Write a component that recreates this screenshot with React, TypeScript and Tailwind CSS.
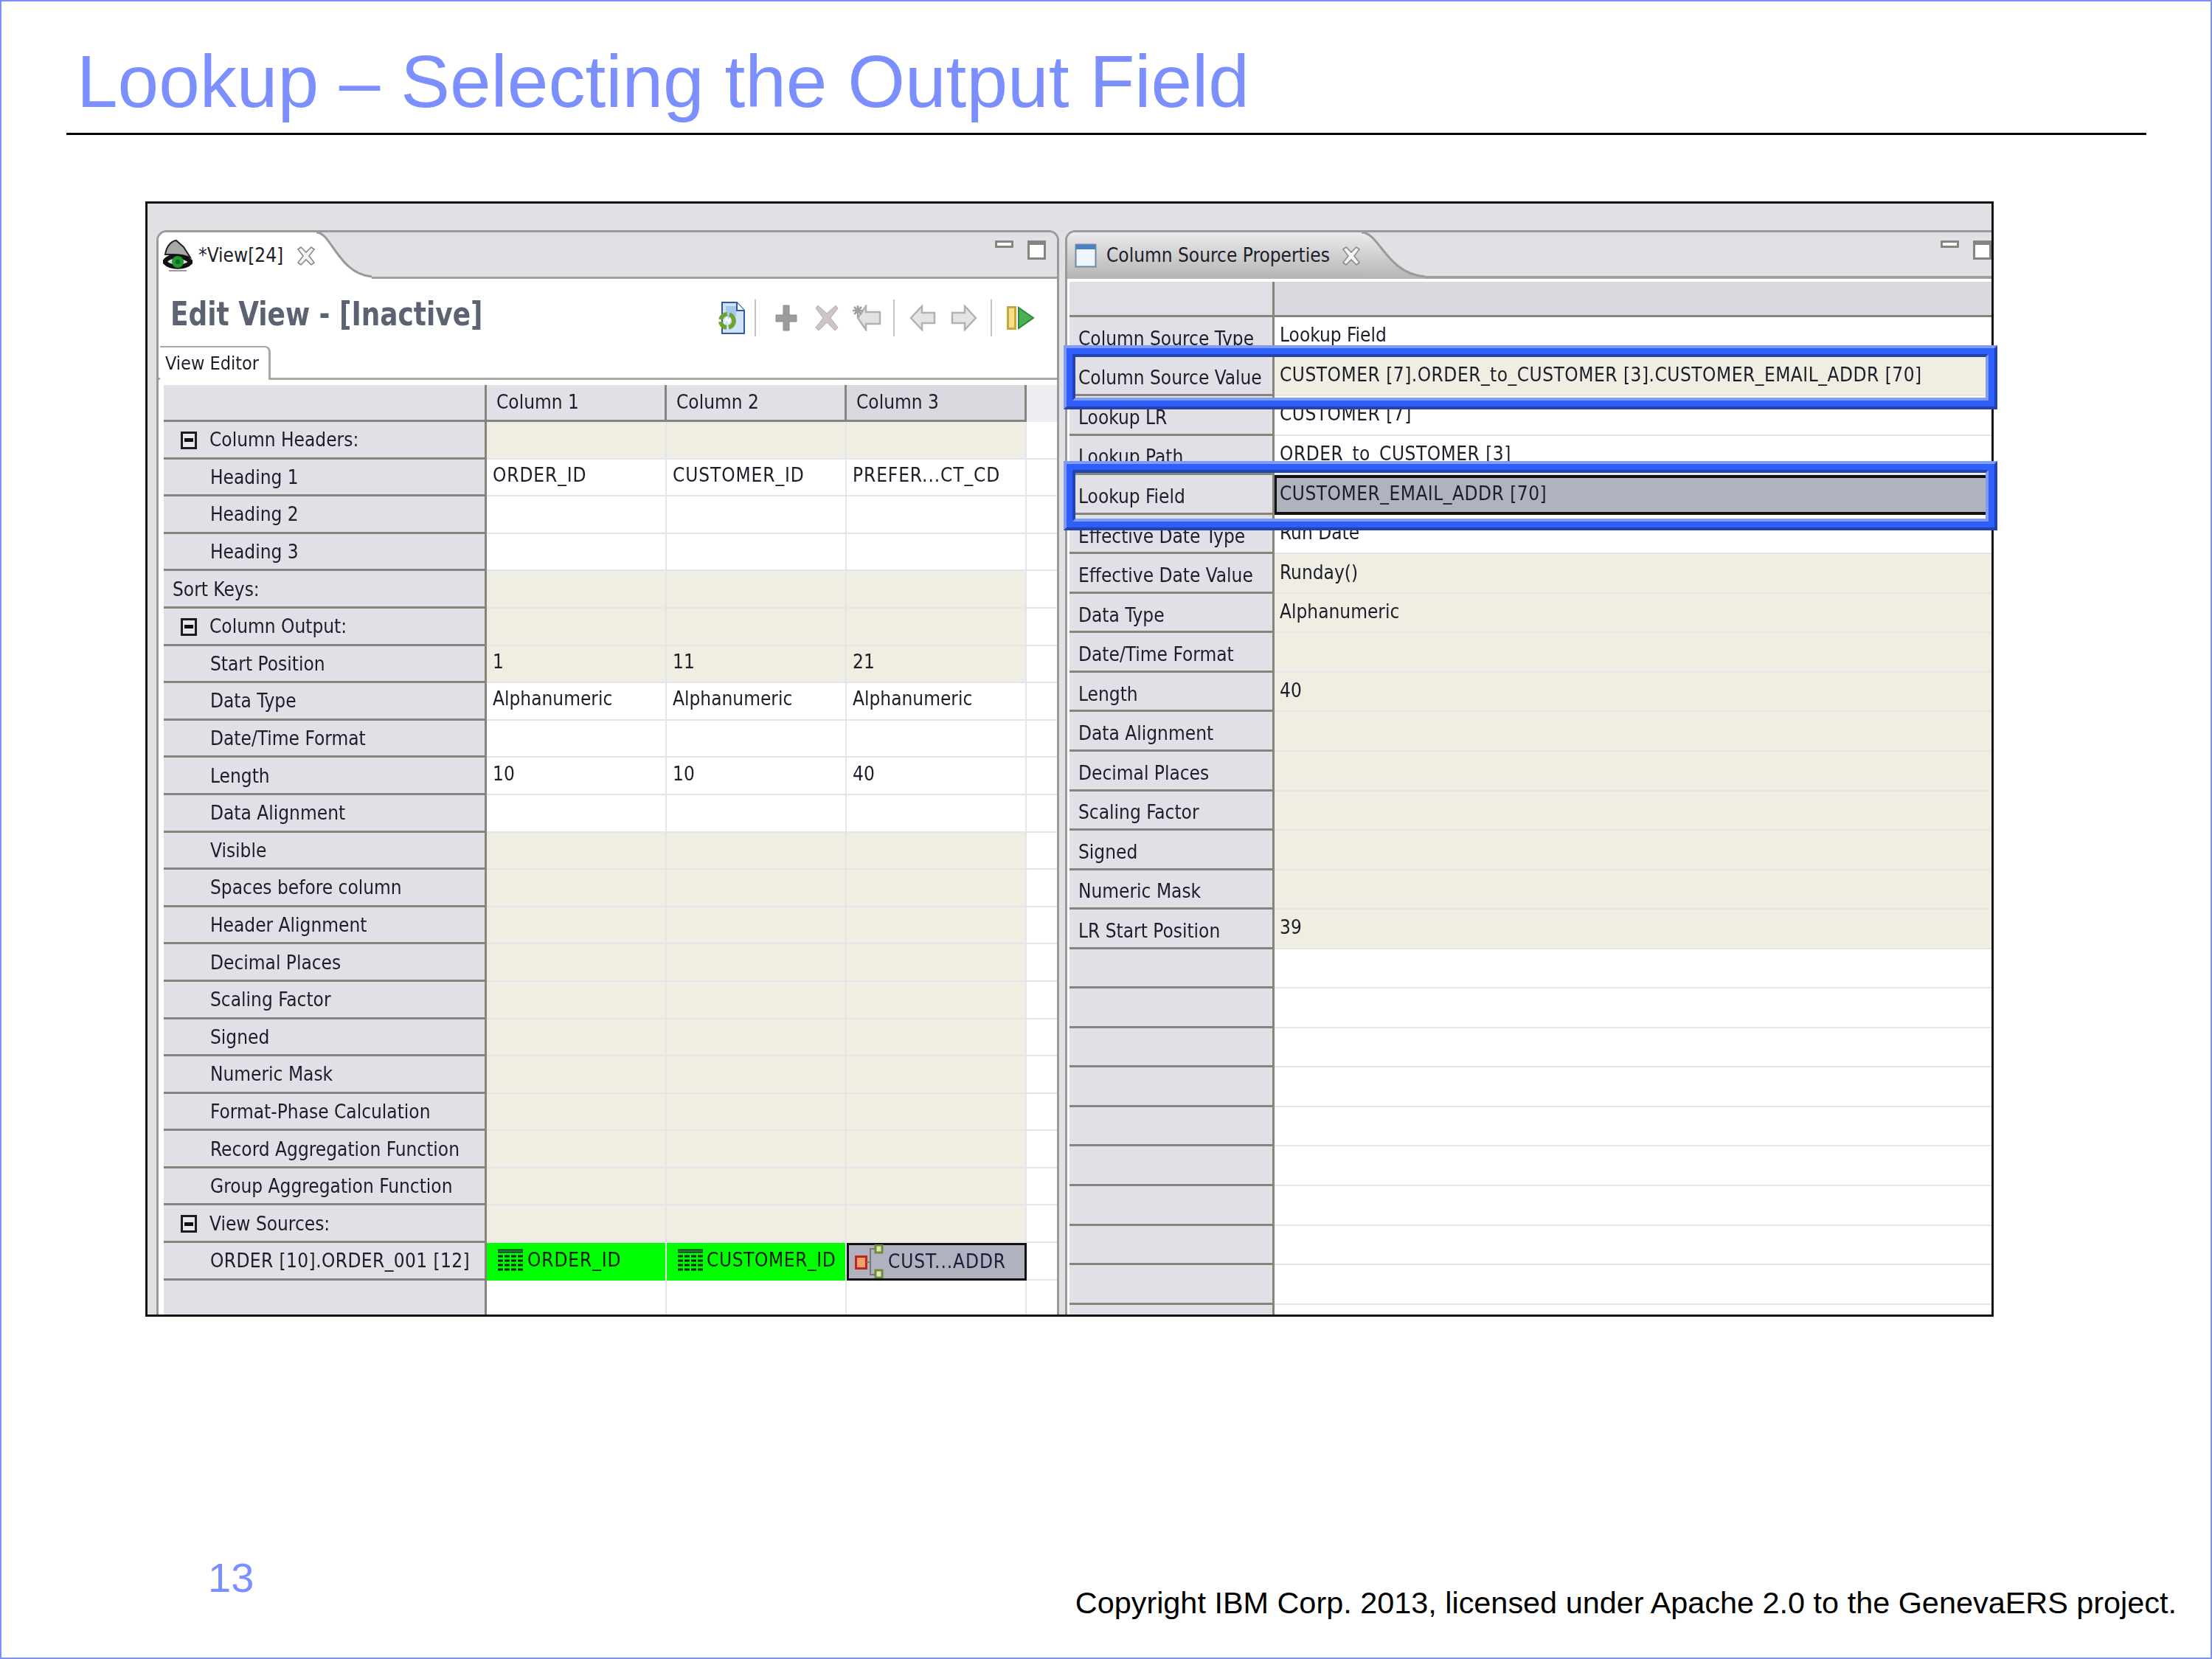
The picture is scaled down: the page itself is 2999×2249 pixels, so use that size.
const leftRows = [
  { label: "Column Headers:", tree: true, bg: "beige" },
  { label: "Heading 1", cells: ["ORDER_ID", "CUSTOMER_ID", "PREFER...CT_CD"], bg: "white" },
  { label: "Heading 2", bg: "white" },
  { label: "Heading 3", bg: "white" },
  { label: "Sort Keys:", flush: true, bg: "beige" },
  { label: "Column Output:", tree: true, bg: "beige" },
  { label: "Start Position", cells: ["1", "11", "21"], bg: "beige" },
  { label: "Data Type", cells: ["Alphanumeric", "Alphanumeric", "Alphanumeric"], bg: "white" },
  { label: "Date/Time Format", bg: "white" },
  { label: "Length", cells: ["10", "10", "40"], bg: "white" },
  { label: "Data Alignment", bg: "white" },
  { label: "Visible", bg: "beige" },
  { label: "Spaces before column", bg: "beige" },
  { label: "Header Alignment", bg: "beige" },
  { label: "Decimal Places", bg: "beige" },
  { label: "Scaling Factor", bg: "beige" },
  { label: "Signed", bg: "beige" },
  { label: "Numeric Mask", bg: "beige" },
  { label: "Format-Phase Calculation", bg: "beige" },
  { label: "Record Aggregation Function", bg: "beige" },
  { label: "Group Aggregation Function", bg: "beige" },
  { label: "View Sources:", tree: true, bg: "beige" },
];

const rightRows = [
  { label: "Column Source Type", value: "Lookup Field", bg: "white" },
  { label: "Column Source Value", value: "CUSTOMER [7].ORDER_to_CUSTOMER [3].CUSTOMER_EMAIL_ADDR [70]", bg: "beige" },
  { label: "Lookup LR", value: "CUSTOMER [7]", bg: "white" },
  { label: "Lookup Path", value: "ORDER_to_CUSTOMER [3]", bg: "white" },
  { label: "Lookup Field", value: "CUSTOMER_EMAIL_ADDR [70]", bg: "selected" },
  { label: "Effective Date Type", value: "Run Date", bg: "white" },
  { label: "Effective Date Value", value: "Runday()", bg: "beige" },
  { label: "Data Type", value: "Alphanumeric", bg: "beige" },
  { label: "Date/Time Format", value: "", bg: "beige" },
  { label: "Length", value: "40", bg: "beige" },
  { label: "Data Alignment", value: "", bg: "beige" },
  { label: "Decimal Places", value: "", bg: "beige" },
  { label: "Scaling Factor", value: "", bg: "beige" },
  { label: "Signed", value: "", bg: "beige" },
  { label: "Numeric Mask", value: "", bg: "beige" },
  { label: "LR Start Position", value: "39", bg: "beige" },
  { label: "", value: "", bg: "white" },
  { label: "", value: "", bg: "white" },
  { label: "", value: "", bg: "white" },
  { label: "", value: "", bg: "white" },
  { label: "", value: "", bg: "white" },
  { label: "", value: "", bg: "white" },
  { label: "", value: "", bg: "white" },
  { label: "", value: "", bg: "white" },
  { label: "", value: "", bg: "white" },
  { label: "", value: "", bg: "white" },
];

// capitals run wider in the original font
const isCaps = (s?: string) => !!s && /[A-Z_]{3}/.test(s);

function TreeBox() {
  return (
    <span className="flex h-[24px] w-[22px] items-center justify-center border-[3px] border-[#1c1c1c] bg-[#e8e8ec] mr-[17px] ml-[23px]">
      <span className="h-[5px] w-[12px] bg-[#111]" />
    </span>
  );
}

function GridIcon() {
  return (
    <svg width="36" height="31" viewBox="0 0 36 31" className="shrink-0">
      <path d="M1 1.5h34M1 4.5h34" stroke="#123" strokeWidth="2" />
      <path d="M1 10h34M1 16h34M1 22h34M1 28h34" stroke="#0a2a0a" strokeWidth="3" strokeDasharray="7 2" />
    </svg>
  );
}

function LookupIcon() {
  return (
    <svg width="40" height="46" viewBox="0 0 40 46" className="shrink-0">
      <rect x="1.5" y="16.5" width="14" height="16" fill="#f4a070" stroke="#c0281c" strokeWidth="3" />
      <path d="M16 24h5M21 24V6h8M21 24v17h8" stroke="#777" strokeWidth="2" fill="none" />
      <rect x="28" y="1" width="9" height="10" fill="#e0e8b0" stroke="#6f8a3a" strokeWidth="3" />
      <rect x="28" y="35" width="9" height="10" fill="#e0e8b0" stroke="#6f8a3a" strokeWidth="3" />
    </svg>
  );
}

function CloseIcon() {
  return (
    <svg width="28" height="28" viewBox="0 0 28 28" className="shrink-0">
      <path d="M3 5l4-3 7 7 7-7 4 3-7 9 7 9-4 3-7-7-7 7-4-3 7-9z" fill="#f4f4f4" stroke="#8a8a8a" strokeWidth="1.6" />
    </svg>
  );
}

function EyeIcon() {
  return (
    <svg width="40" height="44" viewBox="0 0 40 44" className="shrink-0">
      <path d="M3 20C5 6 14 1 18 1l10 9 9 14-11-3-12-1z" fill="#a8a8a8" stroke="#222" strokeWidth="2" />
      <path d="M2 30c6-10 26-10 36 0-8 9-28 9-36 0z" fill="#ddd" stroke="#111" strokeWidth="6" />
      <circle cx="20" cy="30" r="8" fill="#1f9a2e" />
      <circle cx="20" cy="30" r="3" fill="#063" />
      <path d="M8 42h24" stroke="#999" strokeWidth="2" />
    </svg>
  );
}

function WindowIcon() {
  return (
    <svg width="30" height="33" viewBox="0 0 30 33" className="shrink-0">
      <rect x="1.5" y="1.5" width="27" height="30" fill="#eef5fd" stroke="#7088a8" strokeWidth="2" />
      <rect x="2" y="2" width="26" height="6" fill="#4a7fc4" />
    </svg>
  );
}

function MinMax() {
  return (
    <div className="flex items-start gap-[19px]">
      <span className="h-[10px] w-[25px] border-[3px] border-[#85857d] bg-white rounded-[1px]" />
      <span className="h-[26px] w-[25px] border-[3px] border-t-[6px] border-[#85857d] bg-white" />
    </div>
  );
}

function Separator() {
  return <span className="block h-[50px] w-[2px] bg-[#c4c4c4]" />;
}

function DocSyncIcon() {
  return (
    <svg width="38" height="44" viewBox="0 0 38 44">
      <path d="M6 1h20l10 11v31H6z" fill="#cfe2f8" stroke="#2c5aa8" strokeWidth="2" />
      <rect x="11" y="6" width="14" height="14" fill="#a8c8ee" />
      <path d="M26 1v11h10" fill="#fff" stroke="#2c5aa8" strokeWidth="2" />
      <circle cx="13" cy="26" r="9" fill="none" stroke="#6ca52e" strokeWidth="6" strokeDasharray="12 3" />
      <path d="M9 30l3-8 3 6 2-6" fill="none" stroke="#fff" strokeWidth="2" />
    </svg>
  );
}

function PlusIcon() {
  return (
    <svg width="30" height="36" viewBox="0 0 30 36">
      <path d="M11 1h8v13h10v9H19v12h-8V23H1v-9h10z" fill="#9c9c9c" stroke="#8a8a8a" />
    </svg>
  );
}

function CrossIcon() {
  return (
    <svg width="32" height="36" viewBox="0 0 32 36">
      <path d="M4 1l12 11L28 1l3 4-10 13 10 13-4 4-11-11L5 35l-4-4 10-13L1 5z" fill="#cfc4c4" stroke="#b8aaaa" />
    </svg>
  );
}

function StarBackIcon() {
  return (
    <svg width="40" height="36" viewBox="0 0 40 36">
      <path d="M8 18L19 2v8h19v16H19v8z" fill="#e2e2e6" stroke="#b0b0b0" strokeWidth="2.5" />
      <path d="M8 1v16M1 8h14M3 3l10 10M13 3L3 13" stroke="#a0a0a0" strokeWidth="2.5" />
    </svg>
  );
}

function ArrowIcon({ flip }: { flip?: boolean }) {
  return (
    <svg width="36" height="36" viewBox="0 0 36 36" className={flip ? "-scale-x-100" : ""}>
      <path d="M2 18L17 2v9h17v14H17v9z" fill="#e4e4e8" stroke="#b2b2b2" strokeWidth="2.5" />
    </svg>
  );
}

function RunIcon() {
  return (
    <svg width="38" height="32" viewBox="0 0 38 32">
      <rect x="1.5" y="1.5" width="10" height="29" fill="#f4e08a" stroke="#c8a83a" strokeWidth="3" />
      <path d="M16 2l20 14-20 14z" fill="#4caf50" stroke="#2a8a3a" strokeWidth="2" />
    </svg>
  );
}

function LeftCell({ bg, text }: { bg: string; text?: string }) {
  return (
    <div
      className={`flex w-[244px] items-center border-r-2 border-b-2 border-[#e4e4ec] pl-[8px] pb-[5px] ${bg === "beige" ? "bg-[#f0ede2]" : "bg-white"} ${isCaps(text) ? "tracking-[0.9px]" : ""}`}
    >
      {text}
    </div>
  );
}

function LeftTable() {
  return (
    <div className="flex flex-col">
      {/* header */}
      <div className="flex h-[50px] bg-[#eeeef2] text-[#1d1d2b]">
        <div className="w-[438px] border-r-[3px] border-b-[3px] border-[#85857d] bg-[#e0e0e6]" />
        {["Column 1", "Column 2", "Column 3"].map((name, i) => (
          <div
            key={name}
            className={`flex w-[244px] items-center border-r-[3px] border-b-[3px] border-[#85857d] pl-[13px] ${i === 2 ? "bg-[#d9dae0]" : "bg-[#e0e0e6]"}`}
          >
            {name}
          </div>
        ))}
      </div>
      {leftRows.map((row) => (
        <div key={row.label} className="flex h-[50.6px]">
          <div className={`flex w-[438px] items-center border-r-[3px] border-b-[3px] border-[#85857d] bg-[#e0e0e6] pt-[2px] ${row.flush ? "pl-[12px]" : row.tree ? "" : "pl-[63px]"}`}>
            {row.tree && <TreeBox />}
            {row.label}
          </div>
          {[0, 1, 2].map((i) => (
            <LeftCell key={i} bg={row.bg} text={row.cells?.[i]} />
          ))}
          <div className="flex-1 border-b-2 border-[#e4e4ec]" />
        </div>
      ))}
      {/* the source row: two green cells, one selected */}
      <div className="flex h-[50.6px]">
        <div className="flex w-[438px] items-center border-r-[3px] border-b-[3px] border-[#85857d] bg-[#e0e0e6] pl-[63px] pt-[2px] tracking-[0.4px]">
          ORDER [10].ORDER_001 [12]
        </div>
        <div className="flex w-[244px] items-center gap-[5px] border-r-2 border-[#e4e4ec] bg-[#00ff00] pl-[14px] pb-[3px] text-[#0a1a0a] tracking-[0.9px]">
          <GridIcon />ORDER_ID
        </div>
        <div className="flex w-[244px] items-center gap-[4px] border-r-2 border-[#e4e4ec] bg-[#00ff00] pl-[14px] pb-[3px] text-[#0a1a0a] tracking-[0.6px]">
          <GridIcon />CUSTOMER_ID
        </div>
        <div className="flex w-[244px] items-center gap-[5px] border-[3px] border-[#111] bg-[#b0b2bf] pl-[8px] text-[#1d1d3b] tracking-[0.9px]">
          <LookupIcon />CUST...ADDR
        </div>
        <div className="flex-1 border-b-2 border-[#e4e4ec]" />
      </div>
      <div className="flex h-[60px]">
        <div className="w-[438px] border-r-[3px] border-[#85857d] bg-[#e0e0e6]" />
        <div className="w-[244px] border-r-2 border-[#e4e4ec]" />
        <div className="w-[244px] border-r-2 border-[#e4e4ec]" />
        <div className="w-[244px] border-r-2 border-[#e4e4ec]" />
      </div>
    </div>
  );
}

function RightTable() {
  return (
    <div className="flex flex-col">
      <div className="flex h-[48px] bg-[#d9dae0]">
        <div className="w-[278px] border-r-[3px] border-b-[3px] border-[#85857d] bg-[#dfdfe5]" />
        <div className="flex-1 border-b-[3px] border-[#85857d]" />
      </div>
      {rightRows.map((row, i) => (
        <div key={i} className="flex h-[53.55px] shrink-0">
          <div className="flex w-[278px] items-center border-r-[3px] border-b-[3px] border-[#85857d] bg-[#e0e0e6] pl-[12px] pt-[8px]">
            {row.label}
          </div>
          <div
            className={`flex flex-1 items-center ${isCaps(row.value) ? "tracking-[0.5px]" : ""} ${
              row.bg === "selected"
                ? "border-y-[4px] border-l-[3px] border-[#111] bg-[#b0b2bf] pl-[4px] pb-[2px]"
                : row.bg === "beige"
                  ? "border-b-2 border-[#e6e6ea] bg-[#f0ede2] pl-[7px] pb-[2px]"
                  : "border-b-2 border-[#e6e6ea] bg-white pl-[7px] pb-[2px]"
            }`}
          >
            {row.value}
          </div>
        </div>
      ))}
    </div>
  );
}

function Highlight({ top, height }: { top: string; height: string }) {
  return (
    <div className={`absolute left-[1242px] w-[1266px] border-[4px] border-t-[#7f9cf5] border-l-[#7f9cf5] border-r-[#2442ad] border-b-[#2442ad] ${top} ${height}`}>
      <div className="h-full w-full border-[8px] border-[#2f5ffa]">
        <div className="h-full w-full border-[4px] border-t-[#2442ad] border-l-[#2442ad] border-r-[#7f9cf5] border-b-[#7f9cf5]" />
      </div>
    </div>
  );
}

export default function App() {
  return (
    <div className="flex h-[2249px] w-[2999px] flex-col border-2 border-[#7c8fff] bg-white font-['Liberation_Sans',Arial,sans-serif]">
      <h1 className="pl-[102px] pt-[50px] text-[100px] leading-[116px] font-normal text-[#7c8fff]">
        Lookup – Selecting the Output Field
      </h1>
      <div className="mt-[12px] ml-[88px] h-[3px] w-[2820px] bg-black" />

      {/* screenshot of the workbench */}
      <div className="relative mt-[90px] ml-[195px] h-[1512px] w-[2506px] border-[3px] border-[#111] bg-[#e0e0e5] font-['DejaVu_Sans_Condensed','DejaVu_Sans',sans-serif] text-[26px] text-[#1d1d2b]">
        <div className="flex h-full pt-[36px] pl-[12px] blur-[0.5px]">
          {/* view editor panel */}
          <div className="flex h-full w-[1224px] flex-col overflow-hidden rounded-t-[14px] border-x-[3px] border-t-[3px] border-[#9a9a9a] bg-white">
            <div className="flex h-[63px] shrink-0 justify-between border-b-[3px] border-[#a0a0a0] bg-[#e0e0e5] pr-[15px]">
              <div className="-mb-[3px] flex">
                <div className="flex items-center bg-white pl-[6px]">
                  <EyeIcon />
                  <span className="ml-[8px] mr-[17px]">*View[24]</span>
                  <CloseIcon />
                </div>
                <svg width="75" height="63" viewBox="0 0 75 63">
                  <path d="M0 0c20 0 30 56 75 60v3H0z" fill="#fff" />
                  <path d="M0 0c20 0 30 56 75 60" fill="none" stroke="#9a9a9a" strokeWidth="3" />
                </svg>
              </div>
              <div className="pt-[11px]"><MinMax /></div>
            </div>
            <div className="flex items-center justify-between pr-[30px] pl-[16px] pt-[18px]">
              <span className="origin-left scale-x-[0.887] text-[45px] leading-[56px] font-bold text-[#5b6372]">
                Edit View - [Inactive]
              </span>
              <div className="mt-[10px] flex items-center gap-[18px]">
                <span className="-mr-[2px]"><DocSyncIcon /></span>
                <span className="-ml-[4px]"><Separator /></span>
                <span className="ml-[8px]"><PlusIcon /></span>
                <span className="ml-[6px]"><CrossIcon /></span>
                <StarBackIcon />
                <span className="-ml-[2px]"><Separator /></span>
                <span className="ml-[2px]"><ArrowIcon /></span>
                <span className="ml-[2px]"><ArrowIcon flip /></span>
                <Separator />
                <span className="ml-[2px]"><RunIcon /></span>
              </div>
            </div>
            <div className="mt-[13px] flex h-[46px] shrink-0 border-b-[3px] border-[#a8a8a8]">
              <div className="-mb-[3px] ml-[2px] flex w-[150px] items-center rounded-tr-[8px] border-t-2 border-r-[3px] border-[#a8a8a8] bg-white pl-[7px] text-[25px]">
                View Editor
              </div>
            </div>
            <div className="mt-[7px] ml-[7px]">
              <LeftTable />
            </div>
          </div>

          {/* column source properties panel */}
          <div className="ml-[8px] flex h-full flex-1 flex-col overflow-hidden rounded-tl-[14px] border-t-[3px] border-l-[3px] border-[#9a9a9a] bg-white">
            <div className="flex h-[63px] shrink-0 justify-between border-b-[4px] border-[#a0a0a0] bg-[#e0e0e5]">
              <div className="-mb-[4px] flex">
                <div className="flex items-center bg-gradient-to-b from-[#ececee] to-[#b4b4b4] pl-[10px]">
                  <WindowIcon />
                  <span className="ml-[13px] mr-[15px]">Column Source Properties</span>
                  <CloseIcon />
                </div>
                <svg width="86" height="63" viewBox="0 0 86 63">
                  <defs>
                    <linearGradient id="tabfill" x1="0" y1="0" x2="0" y2="1">
                      <stop offset="0" stopColor="#ececee" />
                      <stop offset="1" stopColor="#b4b4b4" />
                    </linearGradient>
                  </defs>
                  <path d="M0 0c24 0 34 56 86 60v3H0z" fill="url(#tabfill)" />
                  <path d="M0 0c24 0 34 56 86 60" fill="none" stroke="#9a9a9a" strokeWidth="3" />
                </svg>
              </div>
              <div className="pt-[11px]"><MinMax /></div>
            </div>
            <div className="ml-[3px] pt-[4px]">
              <RightTable />
            </div>
          </div>
        </div>

        <Highlight top="top-[192px]" height="h-[87px]" />
        <Highlight top="top-[349px]" height="h-[94px]" />
      </div>

      {/* footer */}
      <div className="mt-auto flex items-end justify-between pr-[46px] pb-[50px] pl-[280px]">
        <span className="pb-[25px] text-[56px] leading-[66px] text-[#7c8fff]">13</span>
        <span className="text-[41.4px] leading-[48px] text-black">
          Copyright IBM Corp. 2013, licensed under Apache 2.0 to the GenevaERS project.
        </span>
      </div>
    </div>
  );
}
